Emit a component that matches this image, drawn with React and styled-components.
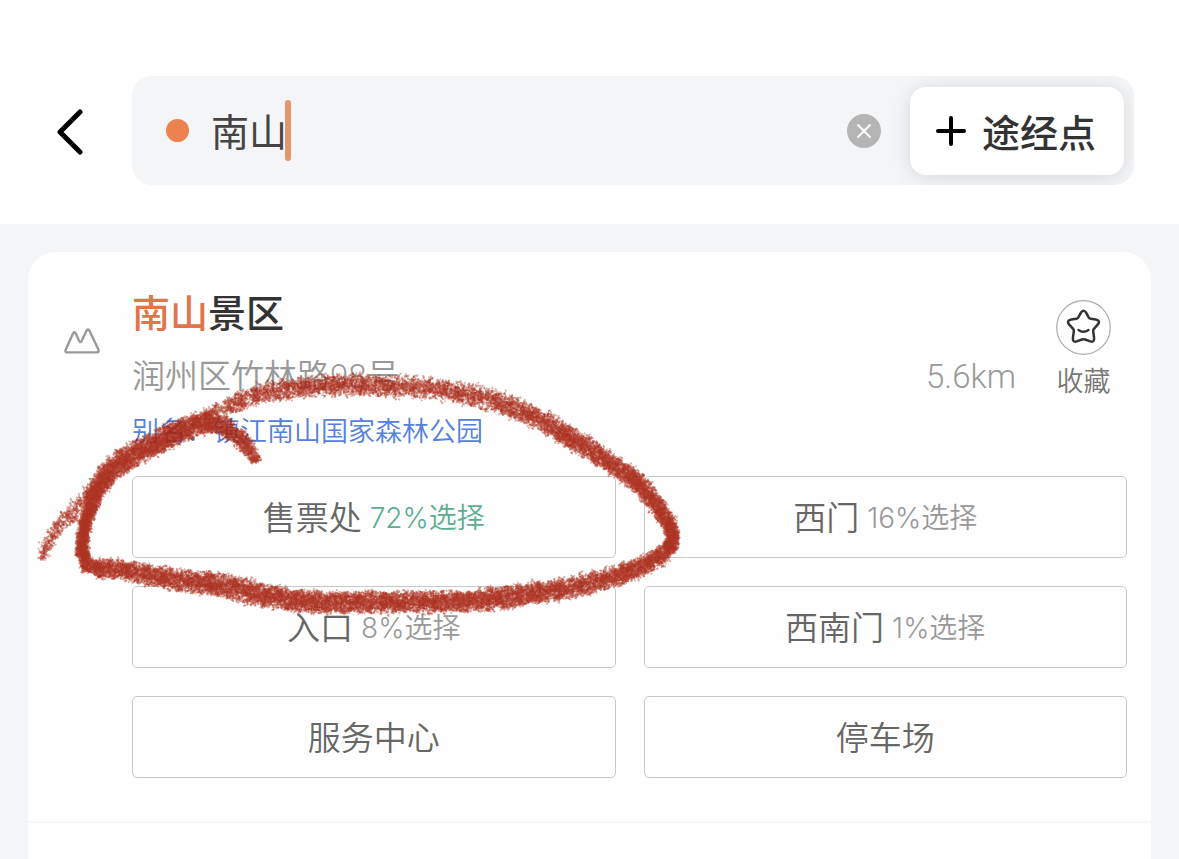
import styled, { createGlobalStyle } from "styled-components";
import { useState } from "react";

const entrances = [
  { name: "售票处", share: "72%选择", top: true },
  { name: "西门", share: "16%选择" },
  { name: "入口", share: "8%选择" },
  { name: "西南门", share: "1%选择" },
  { name: "服务中心" },
  { name: "停车场" },
];

// crayon strokes: [x, y, half width, density]
const strokes = [
  [
    [256, 461, 5, 0.5],
    [247, 447, 9, 0.7],
    [232, 431, 11, 0.8],
    [210, 422, 12, 1.1],
    [187, 428, 13, 1.4],
    [153, 445, 13, 1.3],
    [120, 463, 13, 1.2],
    [101, 482, 10, 1.4],
    [91, 505, 8, 1.5],
    [84, 530, 6, 1.5],
    [83, 557, 7, 1.4],
    [95, 568, 10, 1],
    [120, 569, 11, 0.9],
    [170, 579, 12, 0.9],
    [220, 585, 13, 0.9],
    [273, 597, 13, 1],
    [320, 602, 12, 1],
    [370, 602, 12, 0.9],
    [417, 602, 12, 0.9],
    [470, 601, 12, 1],
    [517, 596, 13, 0.9],
    [583, 585, 12, 0.9],
    [633, 570, 11, 0.9],
    [660, 556, 10, 1],
    [671, 546, 8, 1.2],
  ],
  [
    [671, 548, 7, 1.3],
    [673, 540, 7, 1.4],
    [671, 530, 8, 1.3],
    [661, 512, 9, 1.1],
    [640, 485, 10, 1],
    [603, 458, 11, 1],
    [563, 433, 12, 0.8],
    [523, 412, 12, 0.65],
    [483, 398, 12, 0.55],
    [433, 389, 12, 0.48],
    [383, 386, 12, 0.5],
    [340, 385, 12, 0.52],
    [303, 387, 12, 0.55],
    [253, 396, 11, 0.45],
    [227, 407, 10, 0.4],
    [205, 417, 8, 0.3],
  ],
  [
    [112, 478, 9, 0.35],
    [88, 497, 10, 0.26],
    [66, 519, 9, 0.22],
    [52, 535, 8, 0.24],
    [41, 559, 5, 0.16],
  ],
];

const LAYERS = 6;

const buildCrayon = () => {
  let seed = 7;
  const rand = () => {
    seed = (seed * 16807) % 2147483647;
    return seed / 2147483647;
  };
  const spline = (a, b, c, d, t) =>
    0.5 * (2 * b + (c - a) * t + (2 * a - 5 * b + 4 * c - d) * t * t + (3 * b - a - 3 * c + d) * t * t * t);
  const layers = Array.from({ length: LAYERS }, () => []);

  strokes.forEach((points) => {
    for (let i = 0; i < points.length - 1; i++) {
      const p0 = points[Math.max(i - 1, 0)];
      const p1 = points[i];
      const p2 = points[i + 1];
      const p3 = points[Math.min(i + 2, points.length - 1)];
      const length = Math.hypot(p2[0] - p1[0], p2[1] - p1[1]);
      const angle = Math.atan2(p2[1] - p1[1], p2[0] - p1[0]) + Math.PI / 2;
      const clumps = Math.round(length * 5 * (p1[3] + p2[3]));
      for (let n = 0; n < clumps; n++) {
        const t = rand();
        const half = p1[2] + (p2[2] - p1[2]) * t;
        const spread = (rand() + rand() * 0.6 - 0.8) * half * 1.2;
        const x = spline(p0[0], p1[0], p2[0], p3[0], t) + Math.cos(angle) * spread;
        const y = spline(p0[1], p1[1], p2[1], p3[1], t) + Math.sin(angle) * spread;
        for (let k = 0; k < 4; k++) {
          const dx = x + (rand() + rand() - 1) * 3;
          const dy = y + (rand() + rand() - 1) * 3;
          layers[Math.floor(rand() * LAYERS)].push(
            `M${dx.toFixed(1)} ${dy.toFixed(1)}l${(rand() * 2 - 1).toFixed(1)} ${(rand() * 2 - 1).toFixed(1)}`
          );
        }
      }
    }
  });
  return layers.map((dots) => dots.join(""));
};

const crayon = buildCrayon();

function CrayonCircle() {
  return (
    <Crayon viewBox="28 252 700 400" aria-hidden="true">
      {crayon.map((d, i) => (
        <path key={i} d={d} />
      ))}
    </Crayon>
  );
}

export default function App() {
  const [keyword, setKeyword] = useState("南山");

  return (
    <Page>
      <GlobalStyle />
      <Header>
        <BackButton aria-label="返回">
          <svg width="28" height="48" viewBox="0 0 28 48" fill="none" stroke="#000" strokeWidth="5" strokeLinecap="round" strokeLinejoin="round">
            <path d="M24 5 4 25l20 20" />
          </svg>
        </BackButton>
        <SearchBar>
          <Dot />
          <SearchInput aria-label="搜索地点" value={keyword} onChange={(e) => setKeyword(e.target.value)} />
          <Caret />
          <ClearButton aria-label="清除" onClick={() => setKeyword("")}>
            <svg width="34" height="34" viewBox="0 0 34 34" fill="none" stroke="#fff" strokeWidth="2" strokeLinecap="round">
              <path d="M11 11l12 12M23 11 11 23" />
            </svg>
          </ClearButton>
          <WaypointButton>
            <svg width="30" height="30" viewBox="0 0 30 30" stroke="#000" strokeWidth="4" strokeLinecap="round">
              <path d="M15 2v26M2 15h26" />
            </svg>
            途经点
          </WaypointButton>
        </SearchBar>
      </Header>

      <Results>
        <Card>
          <Place>
            <PlaceIcon width="36" height="26" viewBox="0 0 36 26" fill="none" stroke="#999" strokeWidth="2.4" strokeLinejoin="round">
              <path d="M1.8 21.6 8.8 6q1.6-3.4 3.2 0l3.2 7q1.2 2.2 2.4 0L22.4 3q1.6-3.2 3.2 0l8.8 18.6q1 2.8-1.6 2.8H3.2q-2.6 0-1.4-2.8Z" />
            </PlaceIcon>
            <PlaceBody>
              <PlaceHead>
                <Info>
                  <Title>
                    <Match>南山</Match>景区
                  </Title>
                  <AddressRow>
                    <span>润州区竹林路98号</span>
                    <span>5.6km</span>
                  </AddressRow>
                  <Alias>别名：镇江南山国家森林公园</Alias>
                </Info>
                <FavButton>
                  <svg width="55" height="55" viewBox="0 0 55 55" fill="none">
                    <circle cx="27.5" cy="27.5" r="26.8" stroke="#aaa" strokeWidth="1.2" />
                    <path
                      d="M24.8 12.8q2.7-4 5.4 0l2.3 4.3q.7 1.3 2.2 1.6l5 .9q5.2 1 2.2 4.8l-4 4.5q-.9 1-.7 2.4l.9 6.7q.5 4.6-3.8 3.4l-5.2-1.9q-1.6-.6-3.2 0l-5.2 1.9q-4.3 1.2-3.8-3.4l.9-6.7q.2-1.4-.7-2.4l-4-4.5q-3-3.8 2.2-4.8l5-.9q1.5-.3 2.2-1.6Z"
                      stroke="#333"
                      strokeWidth="2.5"
                      strokeLinejoin="round"
                    />
                    <path d="M22.5 30q5 3.6 10 0" stroke="#333" strokeWidth="2.4" strokeLinecap="round" />
                  </svg>
                  收藏
                </FavButton>
              </PlaceHead>
              <Entrances>
                {entrances.map((item) => (
                  <EntranceButton key={item.name}>
                    {item.name}
                    {item.share && <Share $top={item.top}>{item.share}</Share>}
                  </EntranceButton>
                ))}
              </Entrances>
            </PlaceBody>
            <CrayonCircle />
          </Place>
        </Card>
      </Results>
    </Page>
  );
}

const GlobalStyle = createGlobalStyle`
  * {
    box-sizing: border-box;
  }

  body {
    margin: 0;
    background: #f4f5f7;
  }

  body, button, input {
    font-family: Roboto, "Noto Sans CJK SC", sans-serif;
  }

  button {
    padding: 0;
    border: none;
    background: none;
    cursor: pointer;
  }

  svg {
    flex-shrink: 0;
  }
`;

const Page = styled.div`
  display: flex;
  flex-direction: column;
  min-height: 100vh;
`;

const Header = styled.header`
  display: flex;
  align-items: center;
  gap: 48px;
  padding: 76px 45px 39px 56px;
  background: #fefefe;
`;

const BackButton = styled.button`
  display: flex;
`;

const SearchBar = styled.div`
  display: flex;
  flex: 1;
  align-items: center;
  height: 109px;
  padding: 0 10px 0 34px;
  border-radius: 20px;
  background: #f4f5f7;
  overflow: hidden;
`;

const Dot = styled.span`
  width: 23px;
  height: 23px;
  margin-right: 22px;
  border-radius: 50%;
  background: #ec8250;
`;

const SearchInput = styled.input`
  width: 76px;
  height: 60px;
  padding: 0 0 2px;
  border: none;
  outline: none;
  background: transparent;
  color: #444;
  font-size: 38px;
`;

const Caret = styled.span`
  width: 6px;
  height: 61px;
  margin-left: -2px;
  border-radius: 3px;
  background: #e39668;
`;

const ClearButton = styled.button`
  display: flex;
  margin-left: auto;
  border-radius: 50%;
  background: #b4b4b4;
`;

const WaypointButton = styled.button`
  display: flex;
  align-items: center;
  justify-content: center;
  gap: 16px;
  width: 214px;
  height: 88px;
  margin-left: 29px;
  padding-right: 2px;
  border-radius: 16px;
  background: #fff;
  box-shadow: 0 2px 20px rgba(0, 0, 0, 0.12);
  color: #333;
  font-size: 38px;
  font-weight: 500;
`;

const Results = styled.main`
  display: flex;
  flex: 1;
  flex-direction: column;
  padding: 28px 28px 0;
`;

const Card = styled.section`
  flex: 1;
  border-radius: 28px 28px 0 0;
  background: #fefefe;
`;

const Place = styled.article`
  position: relative;
  display: flex;
  gap: 32px;
  padding: 38px 24px 43px 36px;
  border-bottom: 2px solid #f7f7f7;
`;

const PlaceIcon = styled.svg`
  margin-top: 38px;
`;

const PlaceBody = styled.div`
  flex: 1;
`;

const PlaceHead = styled.div`
  display: flex;
  gap: 40px;
  padding-right: 16px;
`;

const Info = styled.div`
  flex: 1;
`;

const Title = styled.h2`
  margin: 0 0 18px;
  color: #333;
  font-size: 38px;
  font-weight: 500;
  line-height: 48px;
`;

const Match = styled.span`
  color: #e2734a;
`;

const AddressRow = styled.div`
  display: flex;
  justify-content: space-between;
  margin-bottom: 18px;
  color: #999;
  font-size: 33px;
  font-weight: 350;
  line-height: 42px;
`;

const Alias = styled.div`
  color: #5580dc;
  font-size: 27px;
  font-weight: 350;
  line-height: 32px;
`;

const FavButton = styled.button`
  display: flex;
  flex-direction: column;
  align-items: center;
  gap: 11px;
  padding-top: 10px;
  color: #777;
  font-size: 27px;
  font-weight: 350;
  line-height: 32px;
`;

const Entrances = styled.div`
  display: grid;
  grid-template-columns: 1fr 1fr;
  gap: 28px;
  margin-top: 28px;
`;

const EntranceButton = styled.button`
  display: flex;
  align-items: center;
  justify-content: center;
  gap: 8px;
  height: 82px;
  padding-bottom: 2px;
  border: 1px solid #c8c8c8;
  border-radius: 5px;
  color: #666;
  font-size: 33px;
  font-weight: 350;
`;

const Share = styled.span`
  color: ${(props) => (props.$top ? "#5bae8f" : "#999")};
  font-family: Inter, "Noto Sans CJK SC", sans-serif;
  font-size: 28px;
`;

const Crayon = styled.svg`
  position: absolute;
  top: 0;
  left: 0;
  width: 700px;
  height: 400px;
  fill: none;
  stroke: #a92714;
  stroke-width: 1.7px;
  stroke-linecap: round;
  pointer-events: none;

  path {
    opacity: 0.38;
  }
`;
